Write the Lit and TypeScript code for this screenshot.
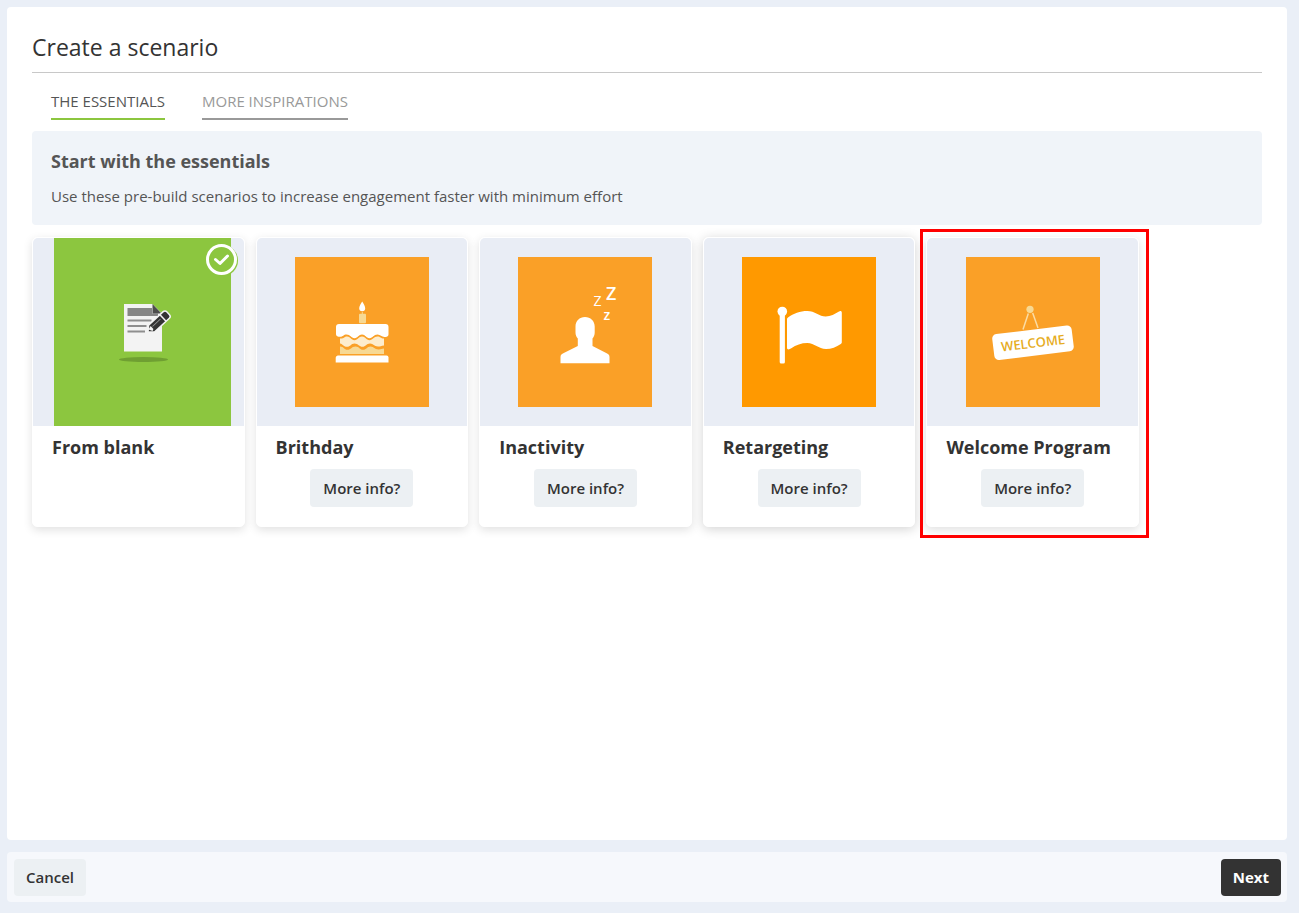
import { LitElement, html, css, svg, nothing, TemplateResult } from "lit";
import { customElement, state } from "lit/decorators.js";
import { classMap } from "lit/directives/class-map.js";

interface Scenario {
  id: string;
  title: string;
  art: TemplateResult;
  info: boolean;
  blank?: boolean;
  raised?: boolean;
  marked?: boolean;
}

const blankArt = html`<svg class="blank" viewBox="0 0 177 188" aria-hidden="true">
  <rect width="177" height="188" fill="#8cc63f" />
  <ellipse cx="89.500" cy="121.500" rx="24.500" ry="2.500" fill="#6f9f32" />
  <path d="M70 66h28.500l9.500 9.500V113.500H70z" fill="#f3f3f3" />
  <path d="M73.500 70H98v5.500h6v2.500H73.500z" fill="#868686" />
  <path d="M98.500 66l9 9.500h-9z" fill="#4d4d4d" />
  <path d="M73.500 82.500h24M73.500 88h19M73.500 93.500h17.500" stroke="#8e8e8e" stroke-width="2" />
  <g transform="translate(94 94) rotate(-43)">
    <path d="M0 0L5-4.500H25a2.500 2.500 0 0 1 2.500 2.500v4a2.500 2.500 0 0 1-2.500 2.500H5z" fill="#333" stroke="#f3f3f3" stroke-width="1.500" stroke-linejoin="round" />
    <path d="M20.500-4.500v9" stroke="#f3f3f3" stroke-width="1.500" />
    <path d="M7-1h11" stroke="#999" stroke-width="1" />
    <path d="M2-1.500l4-1v4l-2 1z" fill="#f3f3f3" />
  </g>
</svg>`;

const tile = (content: TemplateResult, fill = "#faa027") => html`<svg
  class="tile"
  viewBox="0 0 134 150"
  aria-hidden="true"
>
  <rect width="134" height="150" fill=${fill} />
  ${content}
</svg>`;

const cake = tile(svg`
  <path d="M67.200 44.500c1.500 2.500 3 4.800 3 6.800a3 3 0 0 1-6 0c0-2 1.500-4.300 3-6.800z" fill="#fff"/>
  <path d="M67.300 55v3" stroke="#f7d994" stroke-width="1"/>
  <rect x="64" y="56.700" width="7" height="9.500" rx="1" fill="#f7d994"/>
  <path d="M44 67H90.500a3 3 0 0 1 3 3v7.500c0 2-2 2.500-4 2.500-3 0-4-2.500-7-2.500-4 0-4.500 3.700-8 3.700s-4-3.700-7.500-3.700-4 3.700-7.500 3.700-4-3.700-8-3.700c-3 0-3.500 2.300-6.500 2.300-2 0-4-.3-4-2.500V70a3 3 0 0 1 3-3z" fill="#fff"/>
  <path d="M45 81.500c4 .5 4-2 7-2 3.500 0 4 3.700 7.500 3.700s4-3.700 7.500-3.700 4 3.700 7.500 3.700 4-3.700 8-3.700c3 0 3 2 6.500 2v7c-3 .5-3.500 1-6 1-4 0-4.500-3-8-3s-4.500 3.300-7.500 3.300-4.500-3.300-8-3.300-4 3.300-7.500 3.300c-3 0-4-2.500-7-3.300z" fill="#fdedcd"/>
  <path d="M45 89.500c4 0 4 3.300 7.500 3.300s4-3.300 8-3.300 4 3.300 7.500 3.300 4-3.300 7.500-3.300 4 3 8 3c3 0 3-1 5.500-1v5.500H45z" fill="#f7d994"/>
  <path d="M43 98.500H91.500a2 2 0 0 1 2 2v5H40.700v-4.500c0-1.500 1-2.500 2.300-2.500z" fill="#fff"/>
`);

const sleeper = tile(svg`
  <path d="M67 60c5.500 0 9.700 4 9.700 9.500v6c0 2.500-.8 4.300-2.200 6V89l13.700 7c2 1 3.300 1.800 3.300 4v6.300H42.500V100c0-2.200 1.300-3 3.300-4l14-7v-7.500c-1.500-1.700-2.300-3.500-2.300-6v-6C57.500 64 61.500 60 67 60z" fill="#fff"/>
  <text x="88" y="42.500" class="zed" font-size="18" font-weight="600">Z</text>
  <text x="75.500" y="49" class="zed" font-size="14">Z</text>
  <text x="85.500" y="63" class="zed" font-size="14" font-weight="600">z</text>
`);

const flag = tile(
  svg`
  <circle cx="40.300" cy="54.500" r="4.800" fill="#fff"/>
  <rect x="37.700" y="55" width="5.200" height="51.500" rx="1.500" fill="#fff"/>
  <path d="M46 60.500C51.500 56.500 58 54 65.300 54c7.500 0 12 5.500 18.400 5.500 4.800 0 9.300-2.500 13.300-5 1.500-1 2.800-.5 2.800 1.300v29.500c0 .8-.3 1.200-1 1.700-4.500 3-9.300 5-14.800 5-7.500 0-11.500-6-18.700-6-6 0-11.300 2-16 5.300-2 1.500-4.300 1.800-4.300-.5V62.500c0-1 .3-1.500 1-2z" fill="#fff"/>
`,
  "#ff9900"
);

const sign = tile(svg`
  <path d="M62.300 56.500l-5.300 16M66.700 56l5.300 15" stroke="#fbdca4" stroke-width="1.500"/>
  <circle cx="64" cy="52.300" r="3.600" fill="#f7d994"/>
  <g transform="translate(67 85.700) rotate(-7)">
    <rect x="-40" y="-13" width="80" height="26" rx="4.500" fill="#fff"/>
    <text x="0" y="5" text-anchor="middle" class="welcome">WELCOME</text>
  </g>
`);

const scenarios: Scenario[] = [
  { id: "blank", title: "From blank", art: blankArt, info: false, blank: true },
  { id: "birthday", title: "Brithday", art: cake, info: true },
  { id: "inactivity", title: "Inactivity", art: sleeper, info: true },
  { id: "retargeting", title: "Retargeting", art: flag, info: true, raised: true },
  { id: "welcome", title: "Welcome Program", art: sign, info: true, marked: true },
];

@customElement("app-root")
export class AppRoot extends LitElement {
  @state() private selected = "blank";
  @state() private tab = 0;

  static styles = css`
    * {
      box-sizing: border-box;
    }
    :host {
      display: flex;
      flex-direction: column;
      gap: 12px;
      box-sizing: border-box;
      min-height: 100vh;
      padding: 7px 12px 11px 7px;
      background: #eaeff7;
      color: #333;
      font: 15px/20px "Open Sans", sans-serif;
    }
    button {
      font: inherit;
      border: 0;
      cursor: pointer;
    }
    .panel {
      flex: 1;
      padding: 24px 25px;
      background: #fff;
      border-radius: 4px;
    }
    h1 {
      margin: 0;
      padding-bottom: 9px;
      border-bottom: 1px solid #c8c8c8;
      font-size: 23px;
      line-height: 32px;
      font-weight: 400;
    }
    .tabs {
      display: flex;
      gap: 37px;
      padding: 18px 19px 11px;
    }
    .tab {
      padding: 0 0 7px;
      background: none;
      color: #999;
      border-bottom: 2px solid #999;
      text-transform: uppercase;
    }
    .tab.active {
      color: #555;
      border-color: #8cc63f;
    }
    .intro {
      padding: 18px 19px 19px;
      background: #f0f4f9;
      border-radius: 4px;
      color: #555;
    }
    h2 {
      margin: 0 0 13px;
      font-size: 18px;
      line-height: 24px;
      font-weight: 700;
    }
    .intro p {
      margin: 0;
    }
    .cards {
      display: grid;
      grid-template-columns: repeat(5, 1fr);
      gap: 11px;
      width: 90%;
      padding-top: 12px;
    }
    .card {
      position: relative;
      min-height: 290px;
      border: 1px solid #fff;
      border-radius: 5px;
      background: #fff;
      box-shadow: 0 3px 10px rgba(0, 0, 0, 0.12);
      display: flex;
      flex-direction: column;
      align-items: center;
    }
    .card.raised {
      box-shadow: 0 2px 12px rgba(0, 0, 0, 0.18);
    }
    .card.marked::after {
      content: "";
      position: absolute;
      inset: -9px -11px -12px -7px;
      border: 3px solid #f00;
      pointer-events: none;
    }
    .pick {
      position: absolute;
      opacity: 0;
      pointer-events: none;
    }
    .choice {
      align-self: stretch;
      cursor: pointer;
    }
    .media {
      display: flex;
      align-items: center;
      justify-content: center;
      height: 188px;
      background: #e9edf5;
      border-radius: 5px 5px 0 0;
    }
    .media.full {
      justify-content: flex-end;
      padding-right: 13px;
    }
    .tile {
      width: 134px;
      height: 150px;
    }
    .blank {
      width: 177px;
      height: 188px;
    }
    .check {
      position: absolute;
      top: 5px;
      right: 5px;
      width: 34px;
      height: 34px;
    }
    .title {
      display: block;
      padding: 9px 19px 10px;
      font-size: 18px;
      line-height: 24px;
      font-weight: 700;
    }
    .zed {
      font-family: "Open Sans", sans-serif;
      fill: #fff;
    }
    .welcome {
      font: 600 13px "Open Sans", sans-serif;
      fill: #e6ac1c;
    }
    .btn {
      padding: 8px 12px 9px;
      border-radius: 4px;
      background: #ecf0f3;
      color: #333;
      font-weight: 600;
    }
    .info {
      height: 38px;
      padding: 9px 13px;
    }
    .footer {
      display: flex;
      justify-content: space-between;
      align-items: center;
      padding: 7px 6px 6px 7px;
      background: #f6f8fc;
      border-radius: 4px;
    }
    .footer .next {
      background: #333;
      color: #fff;
      font-weight: 700;
    }
  `;

  private renderCard(s: Scenario) {
    const checked = this.selected === s.id;
    return html`<div class=${classMap({ card: true, raised: !!s.raised, marked: !!s.marked })}>
      <input
        class="pick"
        type="radio"
        name="scenario"
        id=${s.id}
        .checked=${checked}
        @change=${() => (this.selected = s.id)}
      />
      <label class="choice" for=${s.id}>
        <span class=${classMap({ media: true, full: !!s.blank })}>${s.art}</span>
        <span class="title">${s.title}</span>
      </label>
      ${checked
        ? html`<svg class="check" viewBox="0 0 34 34" aria-hidden="true">
            <circle cx="17.500" cy="17.500" r="15.500" fill="#8cc63f" />
            <circle cx="16.500" cy="16.500" r="14" fill="#8cc63f" stroke="#fff" stroke-width="3" />
            <path d="M10.500 16.500l4.500 4 7.500-7.500" fill="none" stroke="#fff" stroke-width="3" stroke-linecap="round" stroke-linejoin="round" />
          </svg>`
        : nothing}
      ${s.info ? html`<button class="btn info" type="button">More info?</button>` : nothing}
    </div>`;
  }

  render() {
    return html`
      <main class="panel">
        <h1>Create a scenario</h1>
        <nav class="tabs">
          ${["The essentials", "More inspirations"].map(
            (label, i) => html`<button
              type="button"
              class=${classMap({ tab: true, active: this.tab === i })}
              @click=${() => (this.tab = i)}
            >
              ${label}
            </button>`
          )}
        </nav>
        <section class="intro">
          <h2>Start with the essentials</h2>
          <p>Use these pre-build scenarios to increase engagement faster with minimum effort</p>
        </section>
        <section class="cards">${scenarios.map((s) => this.renderCard(s))}</section>
      </main>
      <footer class="footer">
        <button class="btn" type="button">Cancel</button>
        <button class="btn next" type="button">Next</button>
      </footer>
    `;
  }
}
